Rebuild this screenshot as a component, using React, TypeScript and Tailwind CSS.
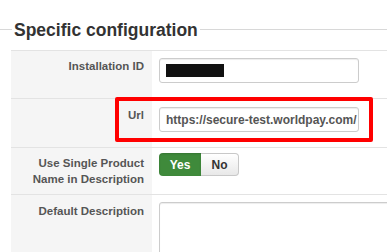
import React from "react";

const font = { fontFamily: '"Liberation Sans", Arial, sans-serif' };

function Label({ children, pt }: { children: React.ReactNode; pt: string }) {
    return (
        <div className={`w-[141px] shrink-0 bg-[#f5f5f5] pr-[8px] text-right text-[11.5px] leading-[16px] font-bold text-[#555] ${pt}`}>
            {children}
        </div>
    );
}

function Field({ children }: { children?: React.ReactNode }) {
    return (
        <div className="w-[200px] h-[25px] flex items-center border border-[#ccc] rounded-[3px] px-[6px] bg-white shadow-[inset_0_1px_1px_rgba(0,0,0,0.075)] overflow-hidden whitespace-nowrap">
            {children}
        </div>
    );
}

export default function App() {
    return (
        <div className="relative w-[387px] h-[252px] overflow-hidden bg-white" style={font}>
            {/* Legend */}
            <div className="h-[50px] flex items-start pt-[20px]">
                <div className="w-[12px] h-px mt-[9px] bg-[#d8d8d8]" />
                <div className="px-[2px] text-[17.5px] leading-[20px] font-bold text-[#333]">Specific configuration</div>
                <div className="flex-1 h-px mt-[9px] bg-[#d8d8d8]" />
            </div>

            {/* Form table */}
            <div className="ml-[11px]">
                <div className="flex h-[48px] border-t border-[#e3e3e3]">
                    <Label pt="pt-[7px]">Installation ID</Label>
                    <div className="flex-1 pl-[7px] pt-[7px]">
                        <Field>
                            <div className="w-[58px] h-[13px] bg-[#111]" />
                        </Field>
                    </div>
                </div>

                <div className="flex h-[49px] border-t border-[#e3e3e3]">
                    <Label pt="pt-[8px]">Url</Label>
                    <div className="flex-1 pl-[7px] pt-[8px]">
                        <Field>
                            <span className="text-[12px] font-bold text-[#555]">https://secure-test.worldpay.com/</span>
                        </Field>
                    </div>
                </div>

                <div className="flex h-[47px] border-t border-[#e3e3e3]">
                    <Label pt="pt-[7px]">
                        Use Single Product
                        <br />
                        Name in Description
                    </Label>
                    <div className="flex-1 pl-[7px] pt-[5px]">
                        <div className="flex h-[23px] text-[12px] font-bold">
                            <div className="w-[42px] flex items-center justify-center rounded-l-[4px] bg-[#3f8a3b] text-white shadow-[inset_0_1px_2px_rgba(0,0,0,0.15)]">
                                Yes
                            </div>
                            <div className="w-[38px] flex items-center justify-center rounded-r-[4px] border border-l-0 border-[#c8c8c8] bg-gradient-to-b from-white to-[#e8e8e8] text-[#333]">
                                No
                            </div>
                        </div>
                    </div>
                </div>

                <div className="flex h-[70px] border-t border-[#e3e3e3]">
                    <Label pt="pt-[8px]">Default Description</Label>
                    <div className="flex-1 pl-[7px] pt-[7px]">
                        <div className="w-[260px] h-[80px] border border-[#ccc] rounded-[3px] bg-white shadow-[inset_0_1px_1px_rgba(0,0,0,0.075)]" />
                    </div>
                </div>
            </div>

            {/* Highlight annotation */}
            <div className="absolute left-[115px] top-[97px] w-[258px] h-[45px] border-[4px] border-[#ff0000] rounded-[2px]" />
        </div>
    );
}
